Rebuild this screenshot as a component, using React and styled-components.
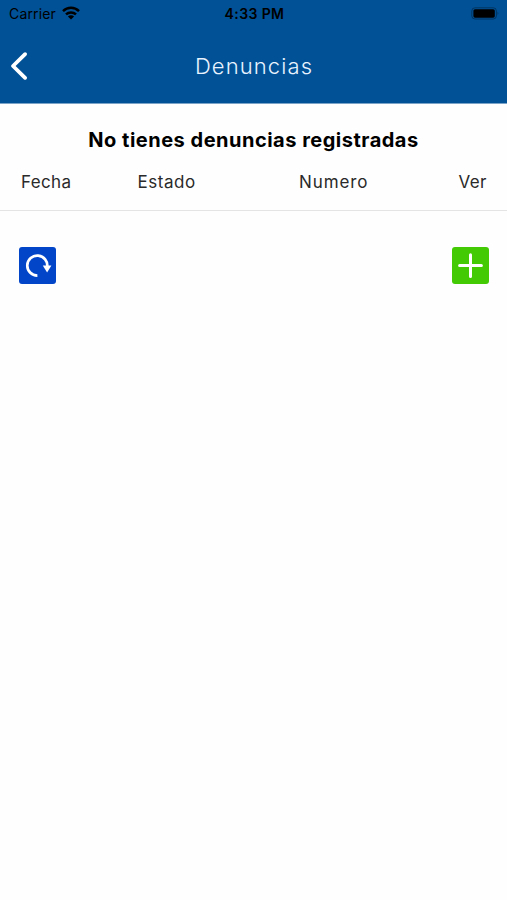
import React from 'react'
import styled, { createGlobalStyle } from 'styled-components';

const columns = [
  { label: 'Fecha', start: 21, spacing: 0.35 },
  { label: 'Estado', start: 137.5, spacing: 0.55 },
  { label: 'Numero', start: 299, spacing: 0.9 },
  { label: 'Ver', start: 458.5, spacing: 0.3 },
];

// each column runs from its own start to the start of the next one
const gridColumns = columns
  .map((col, i) => (i < columns.length - 1 ? `${columns[i + 1].start - col.start}px` : '1fr'))
  .join(' ');

function StatusBar() {
  return (
    <StatusStyle>
      <Carrier>
        <Label>Carrier</Label>
        <svg width="18" height="14" viewBox="0 0 18 14" fill="none" stroke="#000" strokeWidth="2.5">
          <path d="M1 5.1C5.6.7 12.4.7 17 5.1" />
          <path d="M4 8.4C6.8 5.8 11.2 5.8 14 8.4" />
          <path d="M9 13.4L5.9 10.4C7.6 8.8 10.4 8.8 12.1 10.4Z" fill="#000" stroke="none" />
        </svg>
      </Carrier>
      <Time>4:33 PM</Time>
      <Battery>
        <svg width="29" height="13" viewBox="0 0 29 13">
          <rect x="0.8" y="0.8" width="24.6" height="11.2" rx="3.2" fill="none" stroke="#000" strokeOpacity="0.35" />
          <rect x="2.4" y="2.2" width="21.4" height="8.5" rx="1.6" fill="#000" />
          <path d="M26.6 4.6Q28.2 6.4 26.6 8.2Z" fill="#000" fillOpacity="0.4" />
        </svg>
      </Battery>
    </StatusStyle>
  );
}

function App() {
  return (
    <Screen>
      <GlobalStyle />
      <Header>
        <StatusBar />
        <NavBar>
          <BackButton aria-label="Volver">
            <svg width="20" height="32" viewBox="0 0 20 32" fill="none" stroke="#fff" strokeWidth="3.8" strokeLinecap="round" strokeLinejoin="round">
              <path d="M15.1 4.2L3 16L15.1 27.8" />
            </svg>
          </BackButton>
          <Title>Denuncias</Title>
        </NavBar>
      </Header>

      <Message>No tienes denuncias registradas</Message>

      <TableHead>
        {columns.map((col) => (
          <Column key={col.label} $spacing={col.spacing}>{col.label}</Column>
        ))}
      </TableHead>

      <Actions>
        <ActionButton $color="#0345c8" aria-label="Recargar">
          <svg width="37" height="37" viewBox="0 0 37 37" fill="none" stroke="#fff" strokeWidth="2.7">
            <path d="M18.4 28.6A10 10 0 1 1 28.2 20" />
            <path d="M23.8 18.6H32.4L28.1 25.4Z" fill="#fff" stroke="none" />
          </svg>
        </ActionButton>
        <ActionButton $color="#43ca04" aria-label="Agregar">
          <svg width="37" height="37" viewBox="0 0 37 37" fill="none" stroke="#fff" strokeWidth="3" strokeLinecap="round">
            <path d="M7.6 18.6H29.4M18.5 7.7V29.5" />
          </svg>
        </ActionButton>
      </Actions>
    </Screen>
  );
}

export default App


const GlobalStyle = createGlobalStyle`
  body {
    margin: 0;
    background: #fefefe;
  }
  * {
    box-sizing: border-box;
  }
`;

const Screen = styled.div`
  width: 100%;
  min-height: 900px;
  background: #fefefe;
  color: #2a2a2a;
  font-family: Inter, 'Liberation Sans', sans-serif;
`;

const Header = styled.header`
  height: 104px;
  background: #005196;
  border-bottom: 1px solid #7ba3c8;
`;

const StatusStyle = styled.div`
  display: grid;
  grid-template-columns: 1fr auto 1fr;
  align-items: center;
  height: 27px;
  padding: 0 7px 0 9px;
  color: #000;
  font-size: 14px;
`;

const Carrier = styled.div`
  display: flex;
  align-items: center;
  gap: 6px;
  svg {
    margin-top: -1px;
  }
`;

const Label = styled.span`
  width: 47px;
  letter-spacing: 0.15px;
  white-space: nowrap;
`;

const Time = styled.span`
  font-weight: 600;
  letter-spacing: 0.4px;
`;

const Battery = styled.div`
  display: flex;
  justify-content: flex-end;
`;

const NavBar = styled.div`
  display: grid;
  grid-template-columns: 60px 1fr 60px;
  align-items: center;
  height: 77px;
`;

const BackButton = styled.button`
  display: flex;
  padding: 0 0 0 10px;
  border: none;
  background: none;
`;

const Title = styled.h1`
  margin: 0;
  padding-left: 1px;
  color: #e9f3ff;
  font-size: 22px;
  font-weight: 300;
  letter-spacing: 1.1px;
  text-align: center;
  white-space: nowrap;
`;

const Message = styled.h2`
  margin: 0;
  padding-top: 24px;
  color: #000;
  font-size: 20px;
  line-height: 24px;
  font-weight: 700;
  letter-spacing: 0.5px;
  text-align: center;
  white-space: nowrap;
`;

const TableHead = styled.div`
  display: grid;
  grid-template-columns: ${gridColumns};
  height: 59px;
  padding: 19px 0 0 21px;
  border-bottom: 1px solid #e4e4e4;
`;

const Column = styled.span`
  font-size: 17px;
  line-height: 22px;
  font-weight: 400;
  letter-spacing: ${(props) => props.$spacing}px;
`;

const Actions = styled.div`
  display: flex;
  justify-content: space-between;
  padding: 36px 18px 0 19px;
`;

const ActionButton = styled.button`
  display: flex;
  width: 37px;
  height: 37px;
  padding: 0;
  border: none;
  border-radius: 3px;
  background: ${(props) => props.$color};
`;
